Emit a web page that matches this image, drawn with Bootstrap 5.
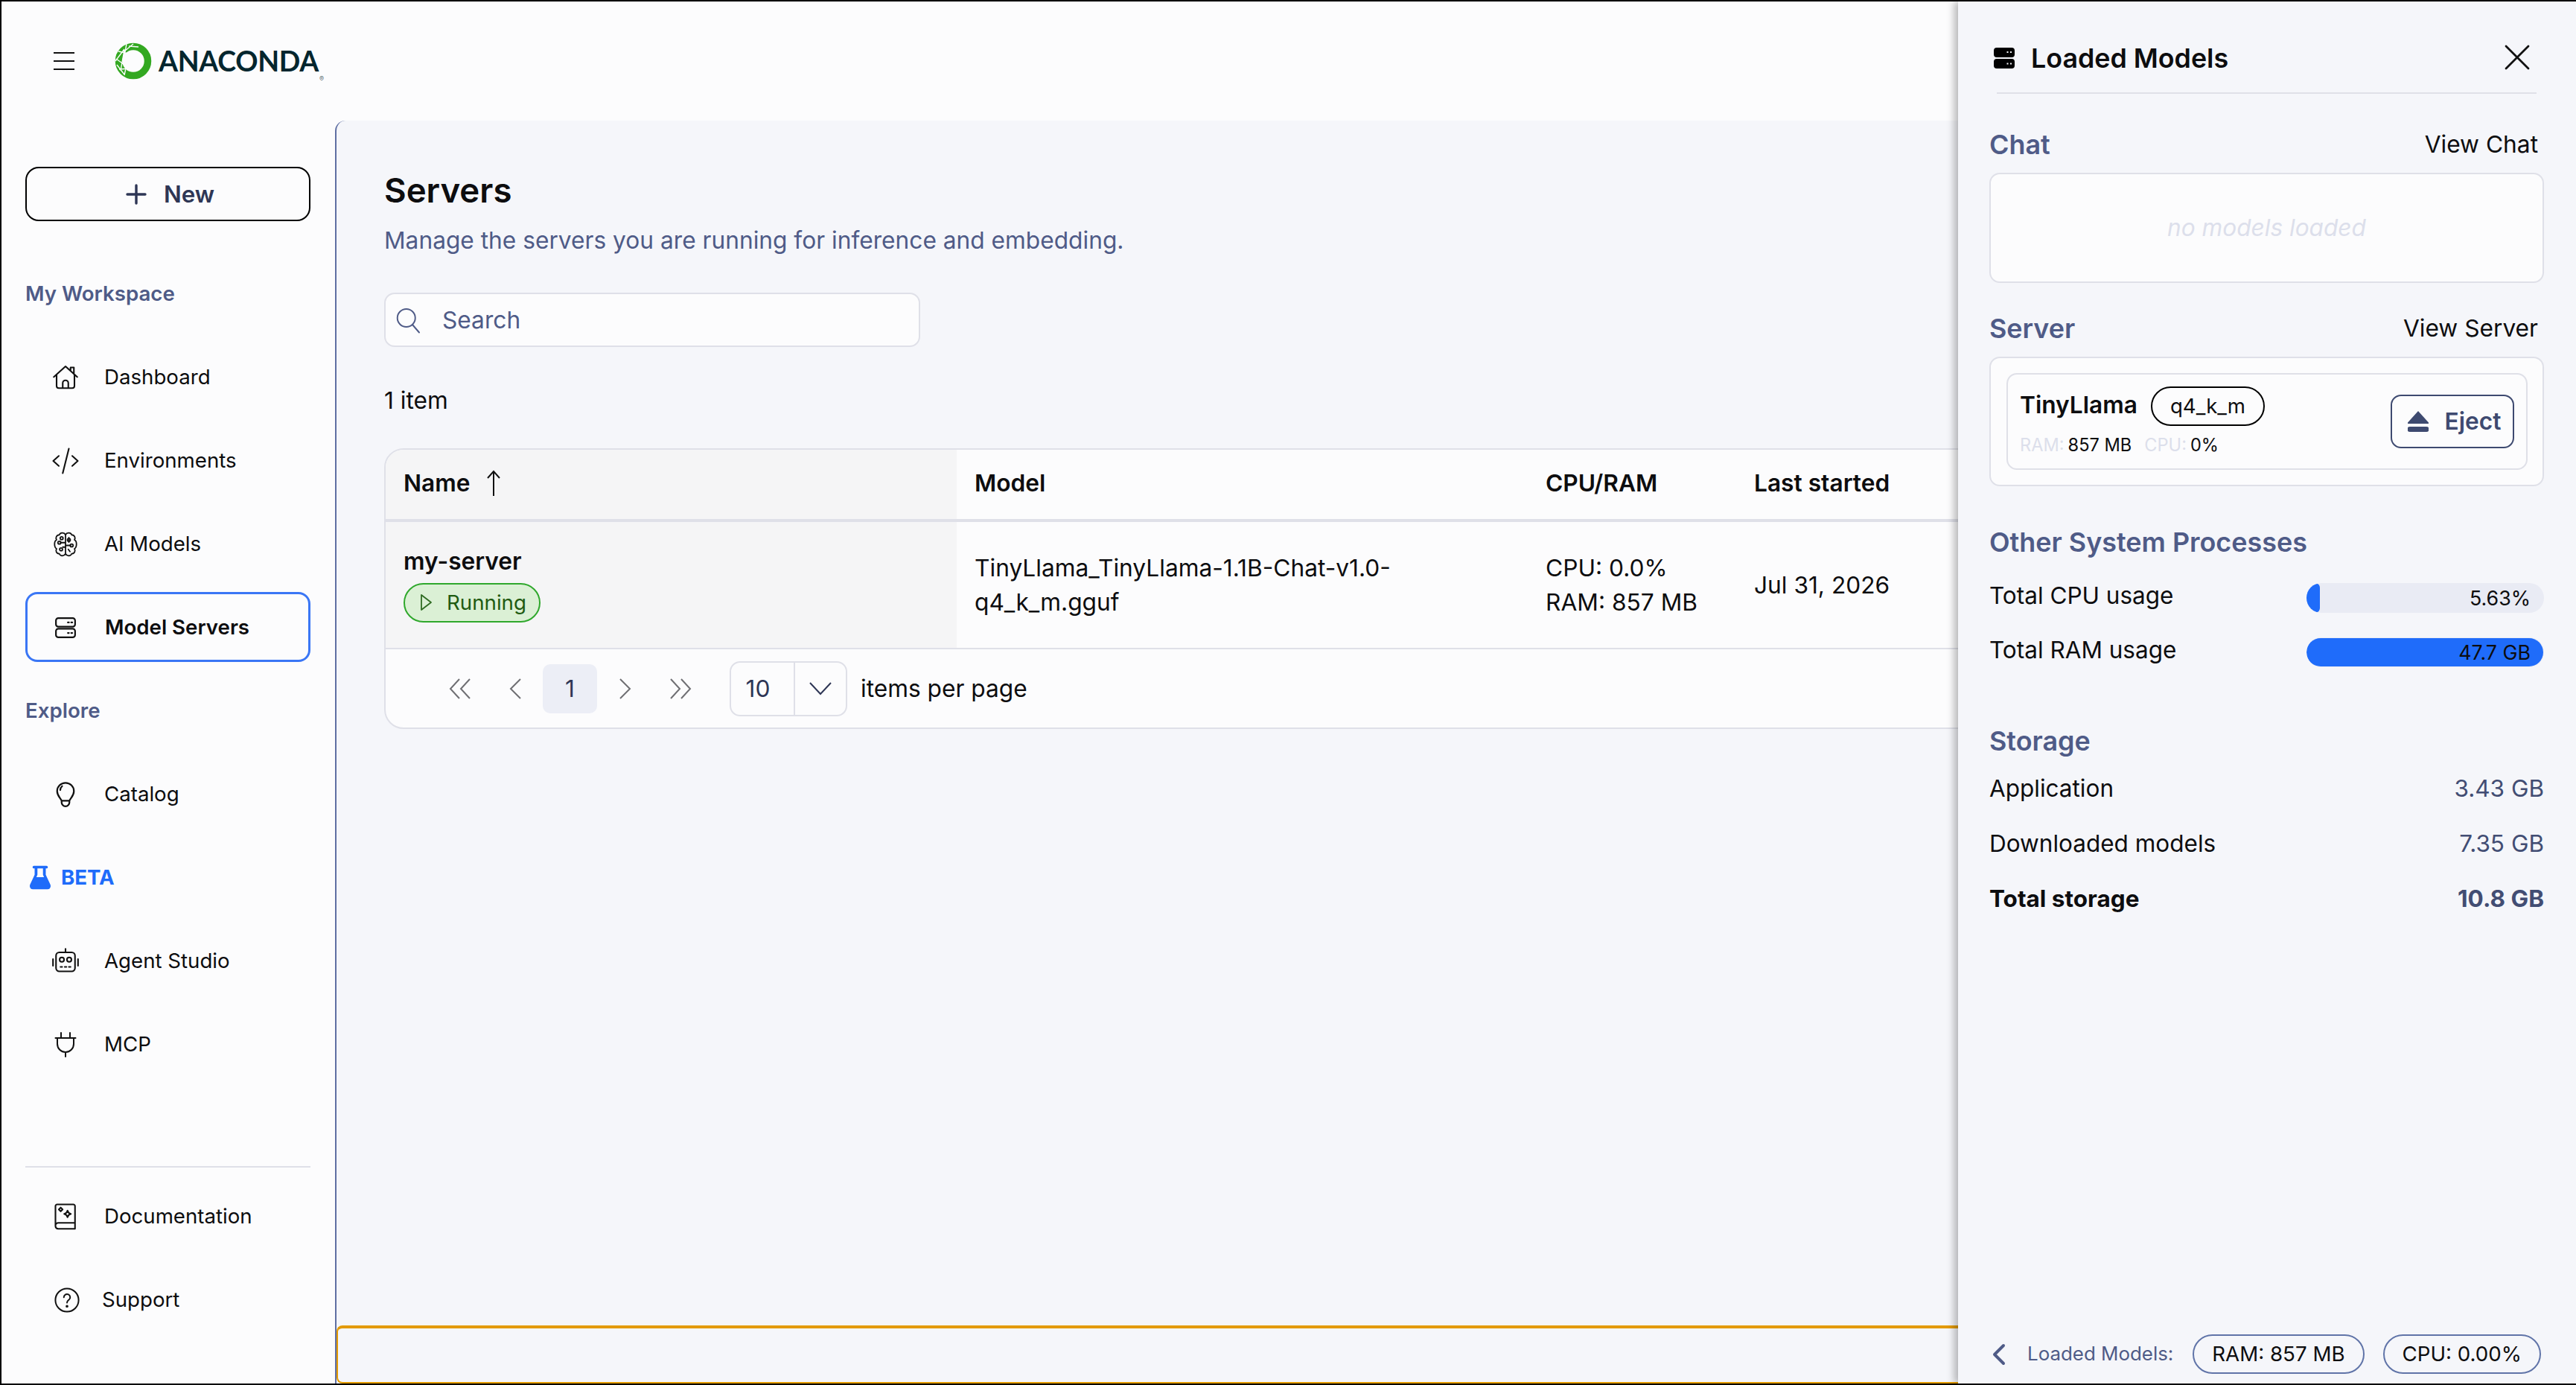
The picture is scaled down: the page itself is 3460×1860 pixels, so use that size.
<!doctype html>
<html lang="en">
<head>
<meta charset="utf-8">
<title>Anaconda - Servers</title>
<link href="https://cdn.jsdelivr.net/npm/bootstrap@5.3.0/dist/css/bootstrap.min.css" rel="stylesheet">
<style>
:root{--ink:#0d0d0f;--slate:#4f5b87;--navy:#2e3655;--line:#dfe0e8;--paper:#fcfcfd;--wash:#f5f6fa;--blue:#1f6cfa;}
html,body{height:100%;overflow:hidden;margin:0}
body{font-family:Inter,"Liberation Sans",sans-serif;font-size:31.7px;color:var(--ink);background:var(--paper);}
svg{display:block;flex:none}
.shell{height:100vh;border:solid #000;border-width:2px 0 2px 2px;background:var(--paper);}
.topbar{height:160px;padding-left:70px;gap:54px}
.brand{gap:9px}
.brand-name{font-family:Lato,"Liberation Sans",sans-serif;font-weight:700;font-size:37.5px;color:#04262e;letter-spacing:-.3px;line-height:1}
.brand-mark{font-size:9px;color:#5c6f73;align-self:flex-end;margin:0 0 -3px -8px;line-height:1}
.side{width:448px;padding:62px 33px 0 32px;height:1696px}
.btn-new{height:73px;border:2.5px solid #000;border-radius:18px;color:var(--navy);font-size:31.3px;font-weight:600;gap:23px;background:transparent;padding:1px 0 0 6px}
.nav-stack{margin-top:50px;gap:18px}
.row-h{height:94px;font-size:27.65px}
.sec-label{font-weight:600;color:var(--slate);padding-top:1px}
.beta{color:var(--blue);font-weight:700;padding-left:6px;gap:14px;padding-top:1px}
.side .nav-link{color:var(--ink);padding:1px 0 0 33px;border:3px solid transparent;border-radius:16px;gap:34px}
.side .nav-link.active{border-color:#3a76f5;font-weight:600;background:transparent;color:var(--ink);gap:35px}
.side .nav-link.support{margin-top:18px;padding-left:36px;gap:30px}
.side-foot{margin-top:auto;padding-bottom:66px}
.side-rule{border-top:2px solid var(--line);margin-bottom:18px}
.main{border-left:2px solid #5f6fa3;border-top-left-radius:14px;background:var(--wash);height:1696px;min-width:0}
.main-in{padding:63px 64px 0 64px;width:3008px}
.page-title{font-size:45.6px;font-weight:600;line-height:60px;margin:0;padding-top:1px;height:60px}
.page-sub{font-size:31.7px;color:var(--slate);line-height:46px;margin:15px 0 47px}
.search{width:720px;height:73px;border:2px solid var(--line);border-radius:14px;background:var(--paper);color:var(--slate);padding:0 0 0 12px;gap:28px;font-size:31.7px}
.count{line-height:46px;margin:49px 0 41px}
.tbl-card{border:2px solid var(--line);border-radius:26px;background:var(--paper);overflow:hidden;width:2880px}
.srv-table{--bs-table-bg:transparent;--bs-table-color:var(--ink);margin:0;table-layout:fixed;width:100%;font-size:31.7px}
.srv-table>:not(caption)>*>*{padding:0 0 0 24px;vertical-align:middle;line-height:46px;border-color:var(--line)}
.srv-table>thead>tr>th{height:95px;border-bottom-width:4px;font-weight:600;padding-bottom:3px}
.srv-table>tbody>tr>td{height:172px;border-bottom-width:2px}
.srv-table>:not(caption)>*>.col-name{background-color:#f5f5f6;padding-left:24px}
.srv-name{font-weight:600;line-height:40px;margin-top:-2px}
.status{height:53px;border:2px solid #2fa82c;background:#dbf0d5;color:#1f5b12;border-radius:27px;padding:0 17px 0 20px;gap:19px;font-size:27.7px;font-weight:400;margin-top:9px}
.pager{height:105px;padding-left:63px}
.pagination{margin:0;--bs-pagination-border-width:0;--bs-pagination-bg:transparent;--bs-pagination-color:#6f6f73;--bs-pagination-font-size:31.7px}
.page-link{width:73px;height:66px;padding:0;display:flex;align-items:center;justify-content:center;border-radius:10px!important;margin:0 1px 0 0!important}
.page-item.active .page-link{background:#eceef6;color:var(--navy)}
.per-page{margin-left:29px;height:74px;width:158px;border:2px solid var(--line);border-radius:14px;color:var(--navy);background:var(--paper)}
.per-page .val{width:86px;text-align:center;border-right:2px solid var(--line);line-height:70px;padding-right:12px}
.per-page .car{flex:1;display:flex;justify-content:center}
.pager-label{margin-left:18px}
.strip{height:78px;margin-top:auto;border:solid #e39a00;border-width:4px 0 2px 2px;border-top-left-radius:8px;border-bottom-left-radius:8px}
.panel{width:830px;background:var(--wash);box-shadow:-5px 0 10px rgba(0,0,0,.28);padding:0 43px 0 42px;top:0;bottom:0;right:0;z-index:5;font-size:31.5px}
.panel-head{height:124px;padding:52px 0 0 0;border-bottom:2px solid var(--line);margin:0 10px}
.panel-title{font-size:35.8px;font-weight:600;line-height:48px;gap:22px;margin:0 0 0 -4px}
.btn-close-x{margin:6px 9px 0 0}
.sec-h{font-size:35.9px;font-weight:600;color:var(--slate);line-height:46px}
.sec-link{font-size:31.7px;color:var(--ink);text-decoration:none;line-height:46px;margin-right:8px}
.box{border:2px solid var(--line);border-radius:14px;background:var(--paper);margin-top:15px}
.empty{height:148px;font-style:italic;color:#dcdfeb;font-size:31.6px}
.srv-box{height:174px;padding:20px 20px 20px 21px}
.srv-inner{height:130px;border:2px solid var(--line);border-radius:14px;padding:0 16px}
.model-name{font-weight:600;font-size:31.7px;line-height:44px;margin-bottom:3px}
.quant{height:53px;border:2px solid #000;border-radius:27px;padding:0 24px;font-size:27.6px;margin-left:18px}
.stats{font-size:23.6px;line-height:30px;margin-top:11px;gap:17px}
.stats i{font-style:normal;color:#dcdfeb;margin-right:5px}
.btn-eject{height:72px;width:166px;border:2.5px solid #3e4a70;border-radius:14px;color:#3e4a70;font-weight:600;font-size:31.7px;padding:0 0 0 5px;gap:22px;background:transparent}
.use-row{height:40px;margin-top:33px}
.use-row .lbl{position:relative;top:-3px}
.progress{width:319px;height:40px;border-radius:20px;--bs-progress-bg:#e9ebf4;--bs-progress-bar-bg:var(--blue);overflow:hidden}
.progress-bar{border-radius:20px 5px 5px 20px/20px 8px 8px 20px;height:38px;margin-top:1px}
.progress-bar.full{border-radius:20px}
.bar-val{right:18px;top:0;line-height:40px;color:var(--ink);font-size:26.8px}
.kv{line-height:46px;margin-top:28px;color:var(--ink)}
.kv b{font-weight:400;color:#424d73}
.kv.total,.kv.total b{font-weight:700}
.panel-foot{margin-top:auto;height:53px;margin-bottom:13px;white-space:nowrap}
.foot-label{font-size:25.9px;color:var(--slate);margin-left:29px;margin-right:26px}
.pill-stat{height:53px;border:2px solid #6074a8;border-radius:27px;padding:0 24px;font-size:27.7px;margin-right:25px;flex:none}
.pill-stat:last-child{margin-right:0}
</style>
</head>
<body>
<div class="shell position-relative d-flex flex-column">
  <header class="topbar d-flex align-items-center flex-shrink-0">
    <svg width="28" height="26" viewBox="0 0 28 26" stroke="#111" stroke-width="2"><path d="M0 2h28M0 13h28M0 24h28"/></svg>
    <div class="brand d-flex align-items-center">
      <svg width="50" height="50" viewBox="0 0 50 50"><circle cx="25" cy="25" r="19.500" fill="none" stroke="#33a821" stroke-width="9.500"/><path d="M1 25L13 9M5 12l14 3M16 2l-3 16M8 38L13 10M2 22l14 10M6 36l14 -1M13 44l3-14M25 2L13 12M19 5l13 1M3 30l10 13" stroke="#fcfcfd" stroke-width="1.400" fill="none"/></svg>
      <span class="brand-name">ANACONDA</span><span class="brand-mark">®</span>
    </div>
  </header>
  <div class="d-flex flex-grow-1" style="min-height:0">
    <aside class="side d-flex flex-column flex-shrink-0">
      <button class="btn btn-new d-flex align-items-center justify-content-center w-100">
        <svg width="28" height="28" viewBox="0 0 28 28" stroke="#2e3655" stroke-width="3.400" stroke-linecap="round"><path d="M14 2v24M2 14h24"/></svg><span>New</span>
      </button>
      <nav class="nav flex-column nav-stack">
        <div class="row-h sec-label d-flex align-items-center"><span>My Workspace</span></div>
        <a class="nav-link row-h d-flex align-items-center" href="#"><svg width="36" height="36" viewBox="0 0 24 24" fill="none" stroke="#111" stroke-width="1.400" stroke-linecap="round" stroke-linejoin="round"><path d="M1.500 11.500 12 2l10.500 9.500M4 9.500V19.500a2 2 0 0 0 2 2h12a2 2 0 0 0 2-2V9.500M9.500 21.500v-4.500a2.500 2.500 0 0 1 5 0v4.500M16.500 6V3h3v6"/></svg><span>Dashboard</span></a>
        <a class="nav-link row-h d-flex align-items-center" href="#"><svg width="36" height="36" viewBox="0 0 24 24" fill="none" stroke="#111" stroke-width="1.400" stroke-linecap="round" stroke-linejoin="round"><path d="M6 7.500 1 12l5 4.500M18 7.500l5 4.500-5 4.500M15 1l-5.500 22"/></svg><span>Environments</span></a>
        <a class="nav-link row-h d-flex align-items-center" href="#"><svg width="36" height="36" viewBox="0 0 24 24" fill="none" stroke="#111" stroke-width="1.200" stroke-linecap="round" stroke-linejoin="round"><path d="M12 3.500C11 1.500 7.500 1 6.500 3.500 4 3.500 2.800 6 4 8c-2.400 1-2.400 6.500 0 8-1.200 2 0 4.500 2.500 4.500 1 2.500 4.500 2 5.500 0 1 2 4.500 2.500 5.500 0 2.500 0 3.700-2.500 2.500-4.500 2.400-1.500 2.400-7 0-8 1.200-2 0-4.500-2.500-4.500C16.500 1 13 1.500 12 3.500zM12 3.500v17M12 10.500H7.500M12 13h4.500M15 10V6"/><circle cx="6.500" cy="10.500" r="1.300"/><circle cx="8.500" cy="6.500" r="1.300"/><circle cx="15" cy="8" r="1.300"/><circle cx="17.500" cy="13" r="1.300"/><circle cx="8" cy="16.500" r="1.300"/><path d="M12 14.500H9.500M14.500 16.500l1.500 2"/></svg><span>AI Models</span></a>
        <a class="nav-link active row-h d-flex align-items-center" href="#"><svg width="36" height="36" viewBox="-2 -2 28 28" fill="none" stroke="#111" stroke-width="1.700"><rect x="2" y="2" width="20" height="9" rx="2.500"/><rect x="2" y="13" width="20" height="9" rx="2.500"/><path d="M14.500 6.500h1M18 6.500h1M14.500 17.500h1M18 17.500h1" stroke-linecap="round" stroke-width="1.800"/></svg><span>Model Servers</span></a>
        <div class="row-h sec-label d-flex align-items-center"><span>Explore</span></div>
        <a class="nav-link row-h d-flex align-items-center" href="#"><svg width="36" height="36" viewBox="0 0 24 24" fill="none" stroke="#111" stroke-width="1.500" stroke-linecap="round" stroke-linejoin="round"><path d="M8.500 17.500C7 14.500 4.500 13 4.500 9a7.500 7.500 0 0 1 15 0c0 4-2.500 5.500-4 8.500zM8.500 17.500v1.500a3.500 3.500 0 0 0 7 0v-1.500M9 4.500C7.800 5.500 7.300 6.800 7.300 8"/></svg><span>Catalog</span></a>
        <div class="row-h beta d-flex align-items-center"><svg width="28" height="33" viewBox="0 0 30 34" fill="#1f6cfa"><path d="M6 0h18a1.500 1.500 0 0 1 0 4h-1v9l6.500 14c1.500 3.500-.5 7-4 7H4.500c-3.500 0-5.500-3.500-4-7L7 13V4H6a1.500 1.500 0 0 1 0-4zM11 4v9l-1.500 3.500h11L19 13V4z"/></svg><span>BETA</span></div>
        <a class="nav-link row-h d-flex align-items-center" href="#"><svg width="36" height="36" viewBox="0 0 24 24" fill="none" stroke="#111" stroke-width="1.400" stroke-linecap="round" stroke-linejoin="round"><rect x="3.500" y="4" width="17" height="17" rx="3"/><path d="M12 .8V4M.8 10v6M23.200 10v6M7.500 17h1.500M11.300 17h1.500M15 17h1.500"/><circle cx="8.700" cy="10.500" r="2"/><circle cx="15.300" cy="10.500" r="2"/></svg><span>Agent Studio</span></a>
        <a class="nav-link row-h d-flex align-items-center" href="#"><svg width="36" height="34" viewBox="0 0 36 34" fill="none" stroke="#111" stroke-width="2" stroke-linecap="round" stroke-linejoin="round"><path d="M4.500 8h27M7 8v8a11 11 0 0 0 22 0V8M12 8V1M24 8V1M18 27v6"/></svg><span>MCP</span></a>
      </nav>
      <div class="side-foot nav flex-column">
        <div class="side-rule"></div>
        <a class="nav-link row-h d-flex align-items-center" href="#"><svg width="36" height="36" viewBox="0 0 24 24" fill="none" stroke="#111" stroke-width="1.400" stroke-linecap="round" stroke-linejoin="round"><path d="M20.500 17.500V2.500a1.500 1.500 0 0 0-1.500-1.500H4.500A1.500 1.500 0 0 0 3 2.500v18A2.500 2.500 0 0 0 5.500 22.800h15M3 20a2.500 2.500 0 0 1 2.500-2.500h15M20.500 17.500v5.300"/><path d="M7.700 3.800l1.700 1.700-1.700 1.700L6 5.500zM13.800 6.500c.4 1.600 1.400 2.700 3 3-1.600.4-2.600 1.400-3 3-.4-1.600-1.400-2.600-3-3 1.600-.3 2.600-1.400 3-3z"/></svg><span>Documentation</span></a>
        <a class="nav-link support row-h d-flex align-items-center" href="#"><svg width="34" height="34" viewBox="0 0 24 24" fill="none" stroke="#111" stroke-width="1.400" stroke-linecap="round"><circle cx="12" cy="12" r="11"/><path d="M9 9.300a3 3 0 1 1 4.800 2.400c-1 .8-1.800 1.300-1.800 2.800"/><circle cx="12" cy="17.800" r=".6" fill="#111"/></svg><span>Support</span></a>
      </div>
    </aside>
    <main class="main flex-grow-1 d-flex flex-column">
      <div class="main-in">
        <h1 class="page-title">Servers</h1>
        <p class="page-sub">Manage the servers you are running for inference and embedding.</p>
        <div class="search d-flex align-items-center">
          <svg width="36" height="36" viewBox="0 0 24 24" fill="none" stroke="#4f5b87" stroke-width="1.300" stroke-linecap="round"><circle cx="10.500" cy="10" r="8"/><path d="M16 16l6 7"/></svg>
          <span>Search</span>
        </div>
        <div class="count">1 item</div>
        <div class="tbl-card">
          <table class="table srv-table">
            <colgroup><col style="width:767px"><col style="width:767px"><col style="width:280px"><col></colgroup>
            <thead>
              <tr>
                <th class="col-name"><span class="d-inline-flex align-items-center" style="gap:20px">Name <svg width="22" height="36" viewBox="0 0 22 36" fill="none" stroke="#111" stroke-width="2"><path d="M11 35V2M3 11l8-9 8 9"/></svg></span></th>
                <th>Model</th><th>CPU/RAM</th><th>Last started</th>
              </tr>
            </thead>
            <tbody>
              <tr>
                <td class="col-name">
                  <div class="srv-name">my-server</div>
                  <span class="status d-inline-flex align-items-center"><svg width="17" height="24" viewBox="0 0 17 24" fill="none" stroke="#2f6b22" stroke-width="1.800" stroke-linejoin="round"><path d="M2 2l13 10L2 22z"/></svg><span>Running</span></span>
                </td>
                <td>TinyLlama_TinyLlama-1.1B-Chat-v1.0-<br>q4_k_m.gguf</td>
                <td>CPU: 0.0%<br>RAM: 857 MB</td>
                <td>Jul 31, 2026</td>
              </tr>
            </tbody>
          </table>
          <div class="pager d-flex align-items-center">
            <ul class="pagination">
              <li class="page-item"><a class="page-link" href="#"><svg width="30" height="28" viewBox="0 0 30 28" fill="none" stroke="#6f6f73" stroke-width="2"><path d="M14 1 2 14l12 13M28 1 16 14l12 13"/></svg></a></li>
              <li class="page-item"><a class="page-link" href="#"><svg width="16" height="28" viewBox="0 0 16 28" fill="none" stroke="#6f6f73" stroke-width="2"><path d="M15 1 2 14l13 13"/></svg></a></li>
              <li class="page-item active"><a class="page-link" href="#">1</a></li>
              <li class="page-item"><a class="page-link" href="#"><svg width="16" height="28" viewBox="0 0 16 28" fill="none" stroke="#6f6f73" stroke-width="2"><path d="M1 1l13 13L1 27"/></svg></a></li>
              <li class="page-item"><a class="page-link" href="#"><svg width="30" height="28" viewBox="0 0 30 28" fill="none" stroke="#6f6f73" stroke-width="2"><path d="M2 1l12 13L2 27M16 1l12 13-12 13"/></svg></a></li>
            </ul>
            <div class="per-page d-flex align-items-center"><span class="val">10</span><span class="car"><svg width="30" height="18" viewBox="0 0 30 18" fill="none" stroke="#2e3655" stroke-width="2"><path d="M1 1l14 15L29 1"/></svg></span></div>
            <span class="pager-label">items per page</span>
          </div>
        </div>
      </div>
      <div class="strip"></div>
    </main>
  </div>
  <section class="panel position-absolute d-flex flex-column">
    <div class="panel-head d-flex justify-content-between align-items-start">
      <h2 class="panel-title d-flex align-items-center"><svg width="28" height="28" viewBox="0 0 28 28" fill="#000"><rect y="0" width="28" height="13" rx="4"/><rect y="15" width="28" height="13" rx="4"/><path d="M17.500 5h2v2h-2zM22 5h2v2h-2zM17.500 20.500h2v2h-2zM22 20.500h2v2h-2z" fill="#f5f6fa"/></svg><span>Loaded Models</span></h2>
      <button class="btn btn-close-x p-0 border-0" aria-label="Close"><svg width="34" height="34" viewBox="0 0 34 34" stroke="#111" stroke-width="2.800" stroke-linecap="round"><path d="M2 2l30 30M32 2 2 32"/></svg></button>
    </div>
    <div class="d-flex justify-content-between" style="margin-top:45px"><span class="sec-h">Chat</span><a href="#" class="sec-link">View Chat</a></div>
    <div class="box empty d-flex align-items-center justify-content-center"><span>no models loaded</span></div>
    <div class="d-flex justify-content-between" style="margin-top:38px"><span class="sec-h">Server</span><a href="#" class="sec-link">View Server</a></div>
    <div class="box srv-box">
      <div class="srv-inner d-flex align-items-center justify-content-between">
        <div>
          <div class="d-flex align-items-center"><span class="model-name">TinyLlama</span><span class="quant d-inline-flex align-items-center"><span>q4_k_m</span></span></div>
          <div class="stats d-flex"><span><i>RAM:</i><span>857 MB</span></span><span><i>CPU:</i>0%</span></div>
        </div>
        <button class="btn btn-eject d-flex align-items-center justify-content-center"><svg width="28" height="28" viewBox="0 0 28 28" fill="#3e4a70"><path d="M14 0 28 15.500c.5.800 0 1.500-1 1.500H1c-1 0-1.500-.700-1-1.500zM3 21h22a3.500 3.500 0 0 1 0 7H3a3.500 3.500 0 0 1 0-7z"/></svg><span>Eject</span></button>
      </div>
    </div>
    <div class="sec-h" style="margin-top:52px">Other System Processes</div>
    <div class="use-row d-flex justify-content-between align-items-center" style="margin-top:32px"><span class="lbl">Total CPU usage</span>
      <div class="progress position-relative"><div class="progress-bar" style="width:18px"></div><span class="bar-val position-absolute">5.63%</span></div></div>
    <div class="use-row d-flex justify-content-between align-items-center"><span class="lbl">Total RAM usage</span>
      <div class="progress position-relative"><div class="progress-bar full" style="width:318px"></div><span class="bar-val position-absolute">47.7 GB</span></div></div>
    <div class="sec-h" style="margin-top:76px">Storage</div>
    <div class="kv d-flex justify-content-between" style="margin-top:18px"><span>Application</span><b>3.43 GB</b></div>
    <div class="kv d-flex justify-content-between"><span>Downloaded models</span><b>7.35 GB</b></div>
    <div class="kv total d-flex justify-content-between"><span>Total storage</span><b>10.8 GB</b></div>
    <div class="panel-foot d-flex align-items-center">
      <svg class="ms-1" width="18" height="30" viewBox="0 0 18 30" fill="none" stroke="#4f5b87" stroke-width="4" stroke-linecap="round" stroke-linejoin="round"><path d="M15 3 3 15l12 12"/></svg>
      <span class="foot-label">Loaded Models:</span>
      <span class="pill-stat d-inline-flex align-items-center">RAM: 857 MB</span>
      <span class="pill-stat d-inline-flex align-items-center">CPU: 0.00%</span>
    </div>
  </section>
</div>
<script src="https://cdn.jsdelivr.net/npm/bootstrap@5.3.0/dist/js/bootstrap.bundle.min.js"></script>
</body>
</html>
